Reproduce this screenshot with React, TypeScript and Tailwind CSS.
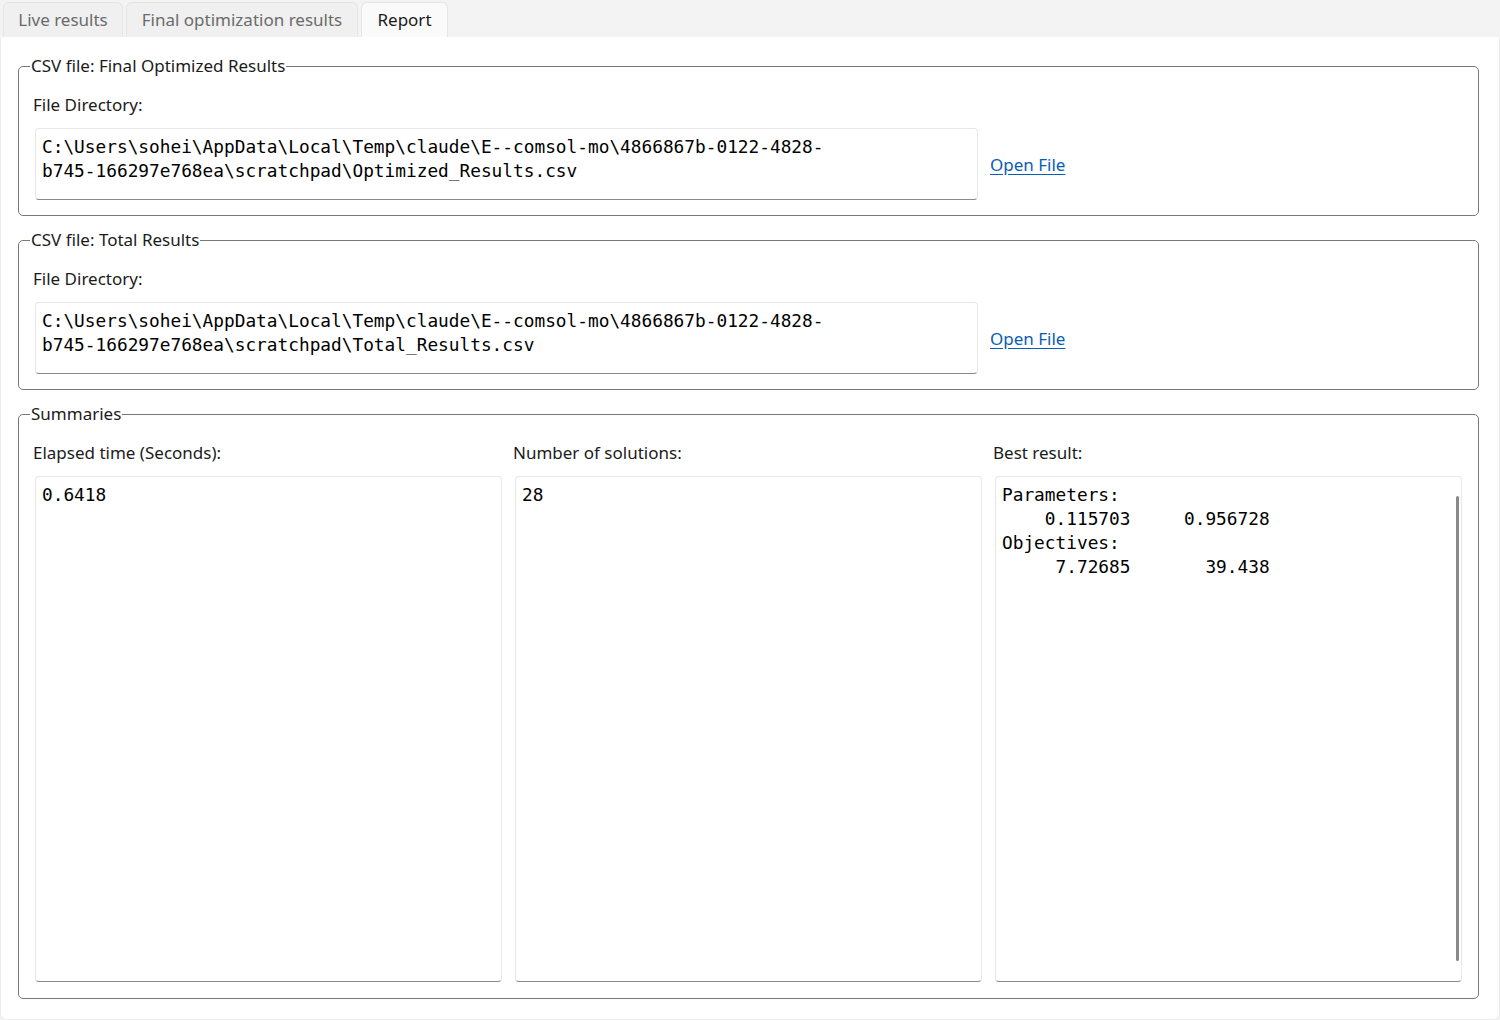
import React from 'react';

const ui = '"Segoe UI", "Noto Sans", Arial, sans-serif';
const mono = '"DejaVu Sans Mono", "Liberation Mono", monospace';

const tabs = [
  { label: 'Live results', w: 'w-[120px]', active: false },
  { label: 'Final optimization results', w: 'w-[232px]', active: false },
  { label: 'Report', w: 'w-[87px]', active: true },
];

const TextBox = ({ children, className = '' }: { children: React.ReactNode; className?: string }) => (
  <div
    className={`relative rounded-[4px] border border-[#e8e8e8] border-b-[#8a8a8a] bg-white px-[6px] pt-[6px] text-[17.8px] leading-[24px] text-black whitespace-pre ${className}`}
    style={{ fontFamily: mono }}
  >
    {children}
  </div>
);

const Group = ({ title, className = '', children }: { title: string; className?: string; children: React.ReactNode }) => (
  <fieldset className={`rounded-[5px] border border-[#787878] pl-[14px] pr-[16px] ${className}`}>
    <legend className="ml-[-3px] px-[1px] text-[17px] leading-[24px] text-[#1b1b1b]">{title}</legend>
    {children}
  </fieldset>
);

const FileGroup = ({ title, path }: { title: string; path: string }) => (
  <Group title={title} className="h-[162px] pt-[15px]">
    <div className="text-[17px] leading-[24px] text-[#1b1b1b]">File Directory:</div>
    <div className="mt-[11px] flex items-center gap-[12px] pl-[2px]">
      <TextBox className="h-[72px] w-[943px]">{path}</TextBox>
      <a className="mt-[1px] text-[17px] leading-[24px] text-[#0a5db3] underline underline-offset-[3px]">Open File</a>
    </div>
  </Group>
);

const SummaryCol = ({ label, children, scroll }: { label: string; children: React.ReactNode; scroll?: boolean }) => (
  <div className="flex flex-col">
    <div className="text-[17px] leading-[24px] text-[#1b1b1b]">{label}</div>
    <TextBox className="mt-[11px] ml-[2px] h-[506px] w-[467px]">
      {children}
      {scroll && <div className="absolute right-[2px] top-[19px] h-[465px] w-[3px] rounded-full bg-[#8a8a8a]" />}
    </TextBox>
  </div>
);

export default function App() {
  return (
    <div className="flex h-[1020px] w-[1500px] flex-col bg-[#f3f3f3]" style={{ fontFamily: ui }}>
      <div className="flex h-[37px] items-end gap-[3px] pl-[3px]">
        {tabs.map((t) => (
          <div
            key={t.label}
            className={`${t.w} flex h-[35px] items-center justify-center rounded-t-[6px] border border-b-0 border-[#e5e5e5] text-[17px] ${
              t.active ? 'bg-[#fafafa] text-[#1b1b1b]' : 'bg-[#f0f0f0] text-[#6b6b6b]'
            }`}
          >
            {t.label}
          </div>
        ))}
      </div>
      <div className="flex flex-1 flex-col gap-[12px] rounded-b-[6px] border border-t-0 border-[#ececec] bg-white pl-[17px] pr-[20px] pt-[17px]">
        <FileGroup
          title="CSV file: Final Optimized Results"
          path={'C:\\Users\\sohei\\AppData\\Local\\Temp\\claude\\E--comsol-mo\\4866867b-0122-4828-\nb745-166297e768ea\\scratchpad\\Optimized_Results.csv'}
        />
        <FileGroup
          title="CSV file: Total Results"
          path={'C:\\Users\\sohei\\AppData\\Local\\Temp\\claude\\E--comsol-mo\\4866867b-0122-4828-\nb745-166297e768ea\\scratchpad\\Total_Results.csv'}
        />
        <Group title="Summaries" className="h-[597px] pt-[15px]">
          <div className="flex gap-[11px]">
            <SummaryCol label="Elapsed time (Seconds):">0.6418</SummaryCol>
            <SummaryCol label="Number of solutions:">28</SummaryCol>
            <SummaryCol label="Best result:" scroll>
              {'Parameters:\n    0.115703     0.956728\nObjectives:\n     7.72685       39.438'}
            </SummaryCol>
          </div>
        </Group>
      </div>
    </div>
  );
}
